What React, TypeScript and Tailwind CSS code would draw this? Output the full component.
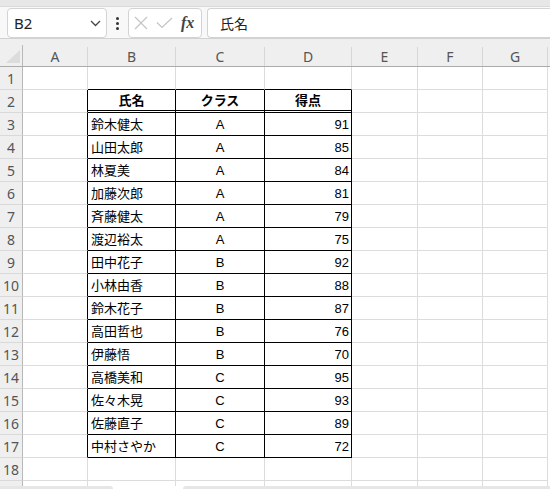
import React from 'react';

type Row = [string, string, number];

const data: Row[] = [
  ['鈴木健太', 'A', 91],
  ['山田太郎', 'A', 85],
  ['林夏美', 'A', 84],
  ['加藤次郎', 'A', 81],
  ['斉藤健太', 'A', 79],
  ['渡辺裕太', 'A', 75],
  ['田中花子', 'B', 92],
  ['小林由香', 'B', 88],
  ['鈴木花子', 'B', 87],
  ['高田哲也', 'B', 76],
  ['伊藤悟', 'B', 70],
  ['高橋美和', 'C', 95],
  ['佐々木晃', 'C', 93],
  ['佐藤直子', 'C', 89],
  ['中村さやか', 'C', 72],
];

const cols = [
  { label: 'A', w: 'w-[65px]' },
  { label: 'B', w: 'w-[88px]' },
  { label: 'C', w: 'w-[89px]' },
  { label: 'D', w: 'w-[87px]' },
  { label: 'E', w: 'w-[66px]' },
  { label: 'F', w: 'w-[65px]' },
  { label: 'G', w: 'w-[65px]' },
];

const headers = ['氏名', 'クラス', '得点'];

function cellText(r: number, c: number) {
  // table lives in B2:D17
  if (c < 1 || c > 3 || r < 2 || r > 17) return null;
  if (r === 2) return headers[c - 1];
  const row = data[r - 3];
  return String(row[c - 1]);
}

function Cell({ r, c }: { r: number; c: number }) {
  const inTable = r >= 2 && r <= 17 && c >= 1 && c <= 3;
  const rightBlack = inTable || (c === 0 && r >= 2 && r <= 17);
  const aboveTable = r === 1 && c >= 1 && c <= 3;

  let bottom = 'border-b border-b-[#dcdcdc]';
  if (inTable && r === 2) bottom = 'border-b-[3px] border-b-black border-double';
  else if (inTable || aboveTable) bottom = 'border-b border-b-black';

  const right = rightBlack ? 'border-r border-r-black' : 'border-r border-r-[#dcdcdc]';

  let align = 'justify-start pl-[3px]';
  if (c === 2 || r === 2) align = 'justify-center';
  if (c === 3 && r !== 2) align = 'justify-end pr-[2px]';

  const text = cellText(r, c);

  return (
    <div className={`${cols[c].w} h-full shrink-0 flex items-center ${align} ${right} ${bottom}`}>
      {text && (
        <span className={`text-[13px] leading-none text-black ${r === 2 ? 'font-bold' : ''}`}>{text}</span>
      )}
    </div>
  );
}

export default function App() {
  const rows = Array.from({ length: 19 }, (_, i) => i + 1);

  return (
    <div
      className="w-[550px] h-[489px] overflow-hidden bg-white flex flex-col"
      style={{ fontFamily: '"Noto Sans", "Noto Sans CJK JP", sans-serif' }}
    >
      {/* 上の帯 */}
      <div className="h-[7px] shrink-0 bg-[#e7e7e7] border-b border-[#dadada]" />

      {/* 名前ボックス + 数式バー */}
      <div className="h-[32px] shrink-0 bg-[#f8f8f8] border-b border-[#d2d2d2] flex items-start pt-[1px]">
        <div className="ml-[7px] w-[100px] h-[30px] rounded-[4px] border border-[#d3d3d3] bg-white flex items-center justify-between pl-[6px] pr-[5px]">
          <span className="text-[15px] text-[#222]">B2</span>
          <svg width="11" height="7" viewBox="0 0 11 7" fill="none">
            <path d="M1 1l4.5 4.5L10 1" stroke="#444" strokeWidth="1.3" />
          </svg>
        </div>
        <div className="w-[21px] h-[30px] flex flex-col items-center justify-center gap-[2px]">
          <span className="w-[3px] h-[3px] rounded-full bg-[#333]" />
          <span className="w-[3px] h-[3px] rounded-full bg-[#333]" />
          <span className="w-[3px] h-[3px] rounded-full bg-[#333]" />
        </div>
        <div className="w-[74px] h-[30px] rounded-[4px] border border-[#d3d3d3] bg-white flex items-center pl-[5px] gap-[8px]">
          <svg width="14" height="14" viewBox="0 0 14 14" fill="none">
            <path d="M1 1l12 12M13 1L1 13" stroke="#c4c4c4" strokeWidth="1.2" />
          </svg>
          <svg width="17" height="12" viewBox="0 0 17 12" fill="none">
            <path d="M1 5.5l5 5L16 1" stroke="#c4c4c4" strokeWidth="1.2" />
          </svg>
          <span
            className="text-[16px] italic font-bold text-[#444] leading-none"
            style={{ fontFamily: '"Liberation Serif", serif' }}
          >
            fx
          </span>
        </div>
        <div className="ml-[5px] flex-1 h-[30px] rounded-l-[4px] border border-r-0 border-[#d3d3d3] bg-white flex items-center pl-[12px]">
          <span className="text-[14px] text-[#222]" style={{ fontFamily: '"Noto Sans CJK JP", sans-serif' }}>
            氏名
          </span>
        </div>
      </div>

      {/* 列見出し */}
      <div className="h-[28px] shrink-0 bg-[#efefef] border-b border-[#ababab] flex items-end">
        <div className="w-[23px] h-[21px] shrink-0 border-r border-[#b8b8b8] flex items-end justify-end pr-[2px] pb-[3px]">
          <svg width="14" height="13" viewBox="0 0 14 13">
            <polygon points="14,0 14,13 0,13" fill="#dcdcdc" />
          </svg>
        </div>
        {cols.map((col) => (
          <div
            key={col.label}
            className={`${col.w} h-[19px] shrink-0 border-r border-[#d6d6d6] flex items-center justify-center text-[14px] text-[#555]`}
          >
            {col.label}
          </div>
        ))}
      </div>

      {/* シート本体 */}
      <div className="flex-1 overflow-hidden">
        {rows.map((r) => (
          <div
            key={r}
            className="h-[23px] flex"
            style={{ fontFamily: '"Liberation Sans", "Noto Sans CJK JP", sans-serif' }}
          >
            <div
              className="w-[23px] h-full shrink-0 bg-[#efefef] border-r border-r-[#b8b8b8] border-b border-b-[#d9d9d9] flex items-center justify-center text-[14px] text-[#555]"
              style={{ fontFamily: '"Noto Sans", sans-serif' }}
            >
              {r <= 18 ? r : ''}
            </div>
            {cols.map((_, c) => (
              <Cell key={c} r={r} c={c} />
            ))}
          </div>
        ))}
      </div>

      {/* 下のタブ帯 */}
      <div className="h-[3px] shrink-0 bg-white flex">
        <div className="w-[113px] h-full rounded-tr-[3px] bg-[#e6e6e6]" />
        <div className="w-[70px]" />
        <div className="flex-1 h-full rounded-tl-[3px] bg-[#e6e6e6]" />
      </div>
    </div>
  );
}
